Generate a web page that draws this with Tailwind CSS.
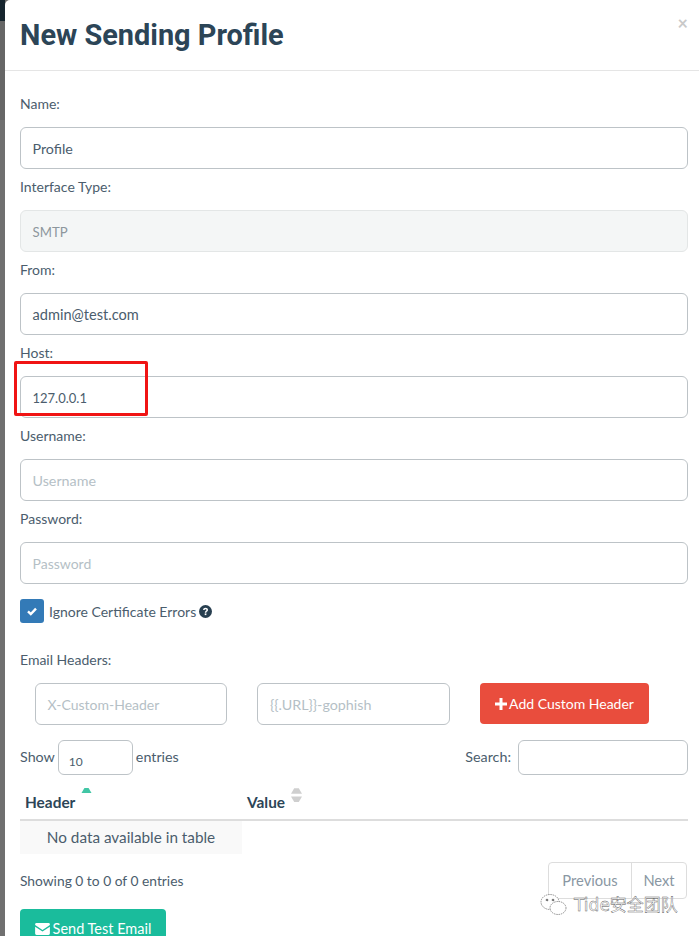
<!DOCTYPE html>
<html>
<head>
<meta charset="utf-8">
<script src="https://cdn.jsdelivr.net/npm/@tailwindcss/browser@4"></script>
</head>
<body class="bg-white">
<div class="relative w-[699px] h-[936px] overflow-hidden bg-[#6b6b6b] font-['Lato','Noto_Sans_CJK_SC',sans-serif] text-[14px] text-[#4b5d6d]">
  <div class="absolute left-0 top-0 w-[5px] h-[21px] bg-[#16252e]"></div>
  <div class="absolute left-0 top-[21px] w-[5px] h-[99px] bg-[#666]"></div>
  <div class="absolute left-0 top-[120px] w-[5px] h-[816px] bg-[#707070]"></div>
  <div class="relative ml-[5px] h-full bg-white rounded-tl-[5px]">
    <header class="flex justify-between h-[71px] border-b border-[#e5e5e5] pl-[15px] pr-[11px]">
      <h1 class="font-['Roboto',sans-serif] font-bold text-[28.900px] leading-[71px] text-[#2c4557]">New Sending Profile</h1>
      <span class="text-[18px] leading-[46px] font-bold text-[#c9c9c9]">×</span>
    </header>
    <main class="pl-[15px] pr-[11px]">
      <div class="h-[56px] pt-[21px] leading-[23px]">Name:</div>
      <div class="h-[42px] border border-[#bdc3c7] rounded-[6px] px-[11.500px] leading-[42px] text-[14.3px]">Profile</div>
      <div class="h-[41px] pt-[6px] leading-[23px]">Interface Type:</div>
      <div class="h-[42px] border border-[#e3e6e6] bg-[#f4f6f6] rounded-[6px] px-[11.500px] leading-[42px] text-[13.2px] text-[#8d979d]">SMTP</div>
      <div class="h-[41px] pt-[6px] leading-[23px]">From:</div>
      <div class="h-[42px] border border-[#bdc3c7] rounded-[6px] px-[11.500px] leading-[42px] text-[14.6px]">admin@test.com</div>
      <div class="h-[41px] pt-[6px] leading-[23px]">Host:</div>
      <div class="h-[42px] border border-[#bdc3c7] rounded-[6px] px-[11.500px] leading-[42px] text-[13px]">127.0.0.1</div>
      <div class="h-[41px] pt-[6px] leading-[23px]">Username:</div>
      <div class="h-[42px] border border-[#bdc3c7] rounded-[6px] px-[11.500px] leading-[42px] text-[14.3px] text-[#b5bfc6]">Username</div>
      <div class="h-[41px] pt-[6px] leading-[23px]">Password:</div>
      <div class="h-[42px] border border-[#bdc3c7] rounded-[6px] px-[11.500px] leading-[42px] text-[14px] text-[#b5bfc6]">Password</div>
      <div class="flex items-center mt-[15px] h-[24px]">
        <span class="flex items-center justify-center w-[24px] h-[24px] rounded-[3px] bg-[#337ab7]">
          <svg class="w-[12px] h-[12px]" viewBox="0 0 12 12"><path d="M2 6.3 4.800 9 10 3.600" fill="none" stroke="#fff" stroke-width="2.4"/></svg>
        </span>
        <span class="ml-[5px]">Ignore Certificate Errors</span>
        <svg class="ml-[3px] w-[13px] h-[13px]" viewBox="0 0 13 13"><circle cx="6.500" cy="6.500" r="6.500" fill="#283f50"/><path d="M4.100 5C4.100 3.600 5.200 2.800 6.500 2.800 7.900 2.800 9 3.700 9 4.900 9 6.400 7.300 6.500 7.300 7.700H5.800C5.800 5.800 7.500 5.800 7.500 4.900 7.500 4.500 7 4.200 6.500 4.200 6 4.200 5.600 4.500 5.500 5.100Z" fill="#fff"/><rect x="5.700" y="8.400" width="1.700" height="1.700" fill="#fff"/></svg>
      </div>
      <div class="mt-[25px] leading-[23px]">Email Headers:</div>
      <div class="flex items-start mt-[12px]">
        <div class="ml-[15px] w-[192px] h-[42px] border border-[#bdc3c7] rounded-[6px] px-[11.500px] leading-[42px] text-[#b5bfc6] whitespace-nowrap overflow-hidden">X-Custom-Header</div>
        <div class="ml-[30px] w-[193px] h-[42px] border border-[#bdc3c7] rounded-[6px] px-3 leading-[42px] text-[14.3px] text-[#b5bfc6] whitespace-nowrap overflow-hidden">{{.URL}}-gophish</div>
        <div class="ml-[30px] flex items-center justify-center gap-[2px] w-[169px] h-[41px] rounded-[4px] bg-[#e94d3d] text-white">
          <svg class="w-[12px] h-[12px]" viewBox="0 0 12 12"><path d="M4.500 0h3v4.500H12v3H7.500V12h-3V7.500H0v-3h4.500z" fill="#fff"/></svg>
          <span>Add Custom Header</span>
        </div>
      </div>
      <div class="flex items-center justify-between mt-[15px] h-[35px] text-[14.3px]">
        <div class="flex items-center">
          <span class="pb-[2px]">Show</span>
          <div class="ml-[3px] w-[75px] h-[35px] border border-[#bdc3c7] rounded-[6px] pl-[10px] pt-[11px] text-[12px] leading-[20px]">10</div>
          <span class="ml-[3px] pb-[2px]">entries</span>
        </div>
        <div class="flex items-center">
          <span class="pb-[2px]">Search:</span>
          <div class="ml-[7px] w-[170px] h-[35px] border border-[#bdc3c7] rounded-[6px]"></div>
        </div>
      </div>
      <div class="flex h-[46px] border-b-2 border-[#dddddd] font-bold text-[15.4px] text-[#2c4557] leading-[23px]">
        <div class="relative w-[222px] pl-[5px] pt-[16px]">Header
          <svg class="absolute left-[61px] top-[13px] w-[11px] h-[5px]" viewBox="0 0 12 6"><path d="M3.500 0h5L12 6H0z" fill="#41c6a5"/></svg>
        </div>
        <div class="relative pl-[5px] pt-[16px]">Value
          <svg class="absolute left-[49px] top-[13px] w-[11px] h-[14px]" viewBox="0 0 12 15"><path d="M3.500 0h5L12 6H0z" fill="#cfcfcf"/><path d="M0 9h12L8.500 15h-5z" fill="#cfcfcf"/></svg>
        </div>
      </div>
      <div class="w-[222px] h-[33px] bg-[#f9f9f9] text-center text-[15.3px] leading-[33px]">No data available in table</div>
      <div class="flex justify-between items-start mt-[8px]">
        <div class="pt-[7px] leading-[23px] text-[13.8px]">Showing 0 to 0 of 0 entries</div>
        <div class="flex h-[37px] mr-[1px] border border-[#dddddd] rounded-[4px] text-[14.700px] text-[#8a97a3] leading-[35px]">
          <div class="w-[83px] text-center border-r border-[#dddddd]">Previous</div>
          <div class="w-[54px] text-center">Next</div>
        </div>
      </div>
      <div class="flex items-center justify-center gap-[3px] mt-[10px] w-[146px] h-[40px] rounded-[4px] bg-[#1abc9c] text-white text-[14.500px]">
        <svg class="w-[15px] h-[12px]" viewBox="0 0 16 13"><path d="M1.500 0h13A1.500 1.500 0 0 1 16 1.500v.6L8 7.500 0 2.100v-.6A1.500 1.500 0 0 1 1.500 0zM0 4l8 5.300L16 4v7.500a1.500 1.500 0 0 1-1.500 1.500h-13A1.500 1.500 0 0 1 0 11.500z" fill="#fff"/></svg>
        <span>Send Test Email</span>
      </div>
    </main>
    <div class="absolute left-[9px] top-[361px] w-[134px] h-[55px] border-[3px] border-[#f01414] rounded-[2px]"></div>
    <div class="absolute left-[535px] top-[893px] flex items-center gap-[7px]">
      <svg class="w-[27px] h-[24px]" viewBox="0 0 27 24" fill="#fff" stroke="#666" stroke-width="0.7" stroke-dasharray="1.500 0.800"><ellipse cx="10" cy="9" rx="9" ry="7.500"/><ellipse cx="18" cy="15" rx="8" ry="6.500"/><circle cx="7" cy="7" r="1" fill="#666"/><circle cx="13" cy="7" r="1" fill="#666"/></svg>
      <span class="text-[17px] leading-[24px] text-white font-['DejaVu_Sans','Noto_Sans_CJK_SC',sans-serif] [-webkit-text-stroke:0.4px_#555] whitespace-nowrap">Tide安全团队</span>
    </div>
  </div>
</div>
</body>
</html>
